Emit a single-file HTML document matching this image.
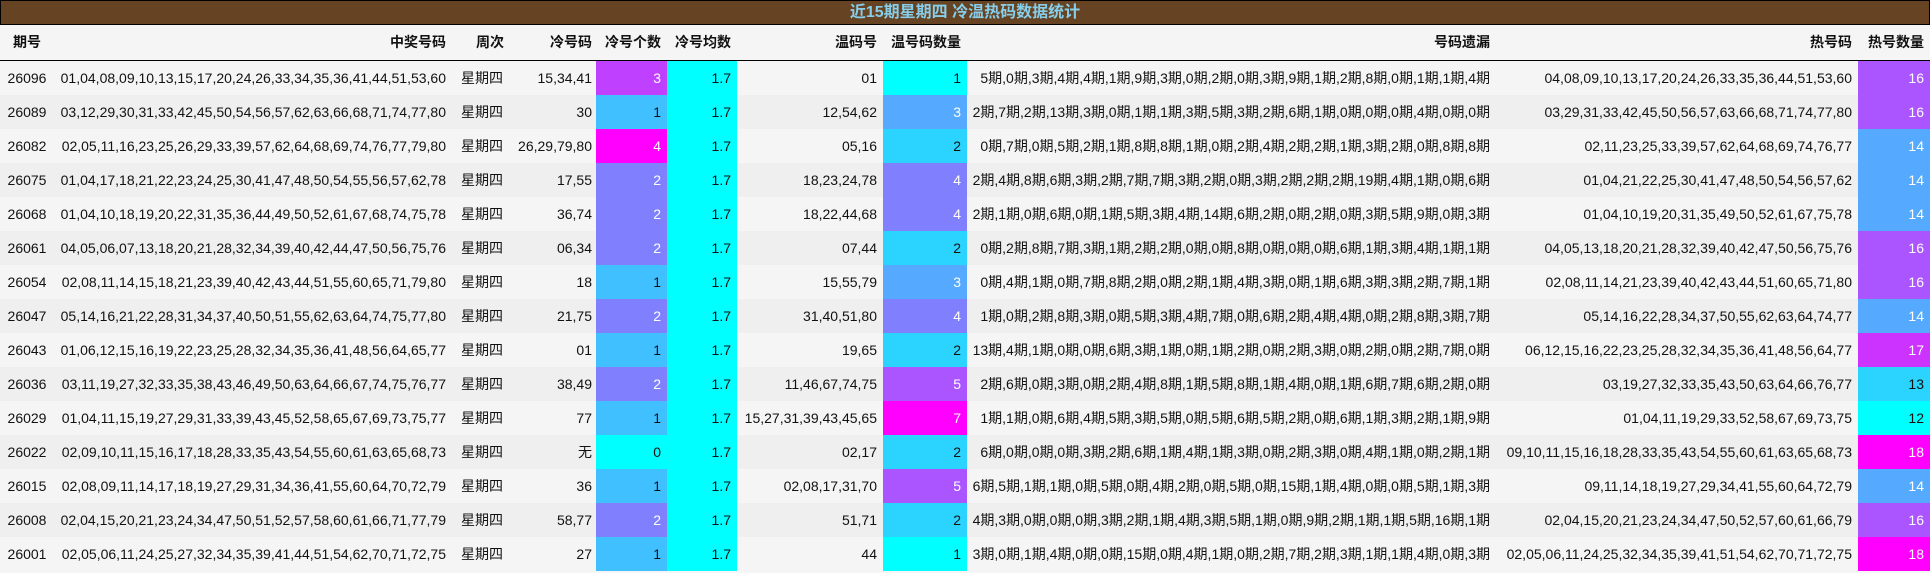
<!DOCTYPE html>
<html><head><meta charset="utf-8"><style>
*{margin:0;padding:0;box-sizing:border-box}
body{width:1930px;height:573px;background:#f5f5f5;font-family:"Liberation Sans","Noto Sans CJK SC",sans-serif;font-size:14px;color:#111;overflow:hidden}
.t{height:25px;background:#654323;border:1px solid #000;color:#87ceeb;font-weight:bold;font-size:16px;text-align:center;line-height:23px}
.r{display:flex;height:34px;line-height:34px;white-space:nowrap;background:#f5f5f5}
.h{height:36px;line-height:35px;border-bottom:1px solid #000;font-weight:bold;background:#f5f5f5}
#rows .r:nth-child(even){background:#efefef}
.r>div{overflow:hidden;padding:0 6px;text-align:right}
.c0{width:54px;text-align:center!important;padding:0!important}
.c1{width:398px}
.c2{width:60px;text-align:center!important;padding:0!important}
.c3{width:84px;padding:0 4px!important}
.c4{width:71px}
.c5{width:70px;background:#00ffff}
.c6{width:146px}
.c7{width:84px}
.c8{width:527px;padding:0 4px!important}
.c9{width:364px}
.c10{width:72px}
.h>div{background:#f5f5f5!important}
.w{color:#fff}
</style></head><body>
<div class="t">近15期星期四 冷温热码数据统计</div>
<div class="r h"><div class="c0">期号</div><div class="c1">中奖号码</div><div class="c2" style="text-align:right!important;padding-right:8px!important">周次</div><div class="c3">冷号码</div><div class="c4">冷号个数</div><div class="c5">冷号均数</div><div class="c6">温码号</div><div class="c7">温号码数量</div><div class="c8">号码遗漏</div><div class="c9">热号码</div><div class="c10">热号数量</div></div>
<div id="rows">
<div class="r"><div class="c0">26096</div><div class="c1">01,04,08,09,10,13,15,17,20,24,26,33,34,35,36,41,44,51,53,60</div><div class="c2">星期四</div><div class="c3">15,34,41</div><div class="c4 w" style="background:#c040ff">3</div><div class="c5">1.7</div><div class="c6">01</div><div class="c7" style="background:#00ffff">1</div><div class="c8">5期,0期,3期,4期,4期,1期,9期,3期,0期,2期,0期,3期,9期,1期,2期,8期,0期,1期,1期,4期</div><div class="c9">04,08,09,10,13,17,20,24,26,33,35,36,44,51,53,60</div><div class="c10 w" style="background:#aa55ff">16</div></div>
<div class="r"><div class="c0">26089</div><div class="c1">03,12,29,30,31,33,42,45,50,54,56,57,62,63,66,68,71,74,77,80</div><div class="c2">星期四</div><div class="c3">30</div><div class="c4" style="background:#40c0ff">1</div><div class="c5">1.7</div><div class="c6">12,54,62</div><div class="c7 w" style="background:#55aaff">3</div><div class="c8">2期,7期,2期,13期,3期,0期,1期,1期,3期,5期,3期,2期,6期,1期,0期,0期,0期,4期,0期,0期</div><div class="c9">03,29,31,33,42,45,50,56,57,63,66,68,71,74,77,80</div><div class="c10 w" style="background:#aa55ff">16</div></div>
<div class="r"><div class="c0">26082</div><div class="c1">02,05,11,16,23,25,26,29,33,39,57,62,64,68,69,74,76,77,79,80</div><div class="c2">星期四</div><div class="c3">26,29,79,80</div><div class="c4 w" style="background:#ff00ff">4</div><div class="c5">1.7</div><div class="c6">05,16</div><div class="c7" style="background:#2ad4ff">2</div><div class="c8">0期,7期,0期,5期,2期,1期,8期,8期,1期,0期,2期,4期,2期,2期,1期,3期,2期,0期,8期,8期</div><div class="c9">02,11,23,25,33,39,57,62,64,68,69,74,76,77</div><div class="c10 w" style="background:#55aaff">14</div></div>
<div class="r"><div class="c0">26075</div><div class="c1">01,04,17,18,21,22,23,24,25,30,41,47,48,50,54,55,56,57,62,78</div><div class="c2">星期四</div><div class="c3">17,55</div><div class="c4 w" style="background:#8080ff">2</div><div class="c5">1.7</div><div class="c6">18,23,24,78</div><div class="c7 w" style="background:#8080ff">4</div><div class="c8">2期,4期,8期,6期,3期,2期,7期,7期,3期,2期,0期,3期,2期,2期,2期,19期,4期,1期,0期,6期</div><div class="c9">01,04,21,22,25,30,41,47,48,50,54,56,57,62</div><div class="c10 w" style="background:#55aaff">14</div></div>
<div class="r"><div class="c0">26068</div><div class="c1">01,04,10,18,19,20,22,31,35,36,44,49,50,52,61,67,68,74,75,78</div><div class="c2">星期四</div><div class="c3">36,74</div><div class="c4 w" style="background:#8080ff">2</div><div class="c5">1.7</div><div class="c6">18,22,44,68</div><div class="c7 w" style="background:#8080ff">4</div><div class="c8">2期,1期,0期,6期,0期,1期,5期,3期,4期,14期,6期,2期,0期,2期,0期,3期,5期,9期,0期,3期</div><div class="c9">01,04,10,19,20,31,35,49,50,52,61,67,75,78</div><div class="c10 w" style="background:#55aaff">14</div></div>
<div class="r"><div class="c0">26061</div><div class="c1">04,05,06,07,13,18,20,21,28,32,34,39,40,42,44,47,50,56,75,76</div><div class="c2">星期四</div><div class="c3">06,34</div><div class="c4 w" style="background:#8080ff">2</div><div class="c5">1.7</div><div class="c6">07,44</div><div class="c7" style="background:#2ad4ff">2</div><div class="c8">0期,2期,8期,7期,3期,1期,2期,2期,0期,0期,8期,0期,0期,0期,6期,1期,3期,4期,1期,1期</div><div class="c9">04,05,13,18,20,21,28,32,39,40,42,47,50,56,75,76</div><div class="c10 w" style="background:#aa55ff">16</div></div>
<div class="r"><div class="c0">26054</div><div class="c1">02,08,11,14,15,18,21,23,39,40,42,43,44,51,55,60,65,71,79,80</div><div class="c2">星期四</div><div class="c3">18</div><div class="c4" style="background:#40c0ff">1</div><div class="c5">1.7</div><div class="c6">15,55,79</div><div class="c7 w" style="background:#55aaff">3</div><div class="c8">0期,4期,1期,0期,7期,8期,2期,0期,2期,1期,4期,3期,0期,1期,6期,3期,3期,2期,7期,1期</div><div class="c9">02,08,11,14,21,23,39,40,42,43,44,51,60,65,71,80</div><div class="c10 w" style="background:#aa55ff">16</div></div>
<div class="r"><div class="c0">26047</div><div class="c1">05,14,16,21,22,28,31,34,37,40,50,51,55,62,63,64,74,75,77,80</div><div class="c2">星期四</div><div class="c3">21,75</div><div class="c4 w" style="background:#8080ff">2</div><div class="c5">1.7</div><div class="c6">31,40,51,80</div><div class="c7 w" style="background:#8080ff">4</div><div class="c8">1期,0期,2期,8期,3期,0期,5期,3期,4期,7期,0期,6期,2期,4期,4期,0期,2期,8期,3期,7期</div><div class="c9">05,14,16,22,28,34,37,50,55,62,63,64,74,77</div><div class="c10 w" style="background:#55aaff">14</div></div>
<div class="r"><div class="c0">26043</div><div class="c1">01,06,12,15,16,19,22,23,25,28,32,34,35,36,41,48,56,64,65,77</div><div class="c2">星期四</div><div class="c3">01</div><div class="c4" style="background:#40c0ff">1</div><div class="c5">1.7</div><div class="c6">19,65</div><div class="c7" style="background:#2ad4ff">2</div><div class="c8">13期,4期,1期,0期,0期,6期,3期,1期,0期,1期,2期,0期,2期,3期,0期,2期,0期,2期,7期,0期</div><div class="c9">06,12,15,16,22,23,25,28,32,34,35,36,41,48,56,64,77</div><div class="c10 w" style="background:#cc33ff">17</div></div>
<div class="r"><div class="c0">26036</div><div class="c1">03,11,19,27,32,33,35,38,43,46,49,50,63,64,66,67,74,75,76,77</div><div class="c2">星期四</div><div class="c3">38,49</div><div class="c4 w" style="background:#8080ff">2</div><div class="c5">1.7</div><div class="c6">11,46,67,74,75</div><div class="c7 w" style="background:#aa55ff">5</div><div class="c8">2期,6期,0期,3期,0期,2期,4期,8期,1期,5期,8期,1期,4期,0期,1期,6期,7期,6期,2期,0期</div><div class="c9">03,19,27,32,33,35,43,50,63,64,66,76,77</div><div class="c10" style="background:#2ad4ff">13</div></div>
<div class="r"><div class="c0">26029</div><div class="c1">01,04,11,15,19,27,29,31,33,39,43,45,52,58,65,67,69,73,75,77</div><div class="c2">星期四</div><div class="c3">77</div><div class="c4" style="background:#40c0ff">1</div><div class="c5">1.7</div><div class="c6">15,27,31,39,43,45,65</div><div class="c7 w" style="background:#ff00ff">7</div><div class="c8">1期,1期,0期,6期,4期,5期,3期,5期,0期,5期,6期,5期,2期,0期,6期,1期,3期,2期,1期,9期</div><div class="c9">01,04,11,19,29,33,52,58,67,69,73,75</div><div class="c10" style="background:#00ffff">12</div></div>
<div class="r"><div class="c0">26022</div><div class="c1">02,09,10,11,15,16,17,18,28,33,35,43,54,55,60,61,63,65,68,73</div><div class="c2">星期四</div><div class="c3">无</div><div class="c4" style="background:#00ffff">0</div><div class="c5">1.7</div><div class="c6">02,17</div><div class="c7" style="background:#2ad4ff">2</div><div class="c8">6期,0期,0期,0期,3期,2期,6期,1期,4期,1期,3期,0期,2期,3期,0期,4期,1期,0期,2期,1期</div><div class="c9">09,10,11,15,16,18,28,33,35,43,54,55,60,61,63,65,68,73</div><div class="c10 w" style="background:#ff00ff">18</div></div>
<div class="r"><div class="c0">26015</div><div class="c1">02,08,09,11,14,17,18,19,27,29,31,34,36,41,55,60,64,70,72,79</div><div class="c2">星期四</div><div class="c3">36</div><div class="c4" style="background:#40c0ff">1</div><div class="c5">1.7</div><div class="c6">02,08,17,31,70</div><div class="c7 w" style="background:#aa55ff">5</div><div class="c8">6期,5期,1期,1期,0期,5期,0期,4期,2期,0期,5期,0期,15期,1期,4期,0期,0期,5期,1期,3期</div><div class="c9">09,11,14,18,19,27,29,34,41,55,60,64,72,79</div><div class="c10 w" style="background:#55aaff">14</div></div>
<div class="r"><div class="c0">26008</div><div class="c1">02,04,15,20,21,23,24,34,47,50,51,52,57,58,60,61,66,71,77,79</div><div class="c2">星期四</div><div class="c3">58,77</div><div class="c4 w" style="background:#8080ff">2</div><div class="c5">1.7</div><div class="c6">51,71</div><div class="c7" style="background:#2ad4ff">2</div><div class="c8">4期,3期,0期,0期,0期,3期,2期,1期,4期,3期,5期,1期,0期,9期,2期,1期,1期,5期,16期,1期</div><div class="c9">02,04,15,20,21,23,24,34,47,50,52,57,60,61,66,79</div><div class="c10 w" style="background:#aa55ff">16</div></div>
<div class="r"><div class="c0">26001</div><div class="c1">02,05,06,11,24,25,27,32,34,35,39,41,44,51,54,62,70,71,72,75</div><div class="c2">星期四</div><div class="c3">27</div><div class="c4" style="background:#40c0ff">1</div><div class="c5">1.7</div><div class="c6">44</div><div class="c7" style="background:#00ffff">1</div><div class="c8">3期,0期,1期,4期,0期,0期,15期,0期,4期,1期,0期,2期,7期,2期,3期,1期,1期,4期,0期,3期</div><div class="c9">02,05,06,11,24,25,32,34,35,39,41,51,54,62,70,71,72,75</div><div class="c10 w" style="background:#ff00ff">18</div></div>
</div>
</body></html>
